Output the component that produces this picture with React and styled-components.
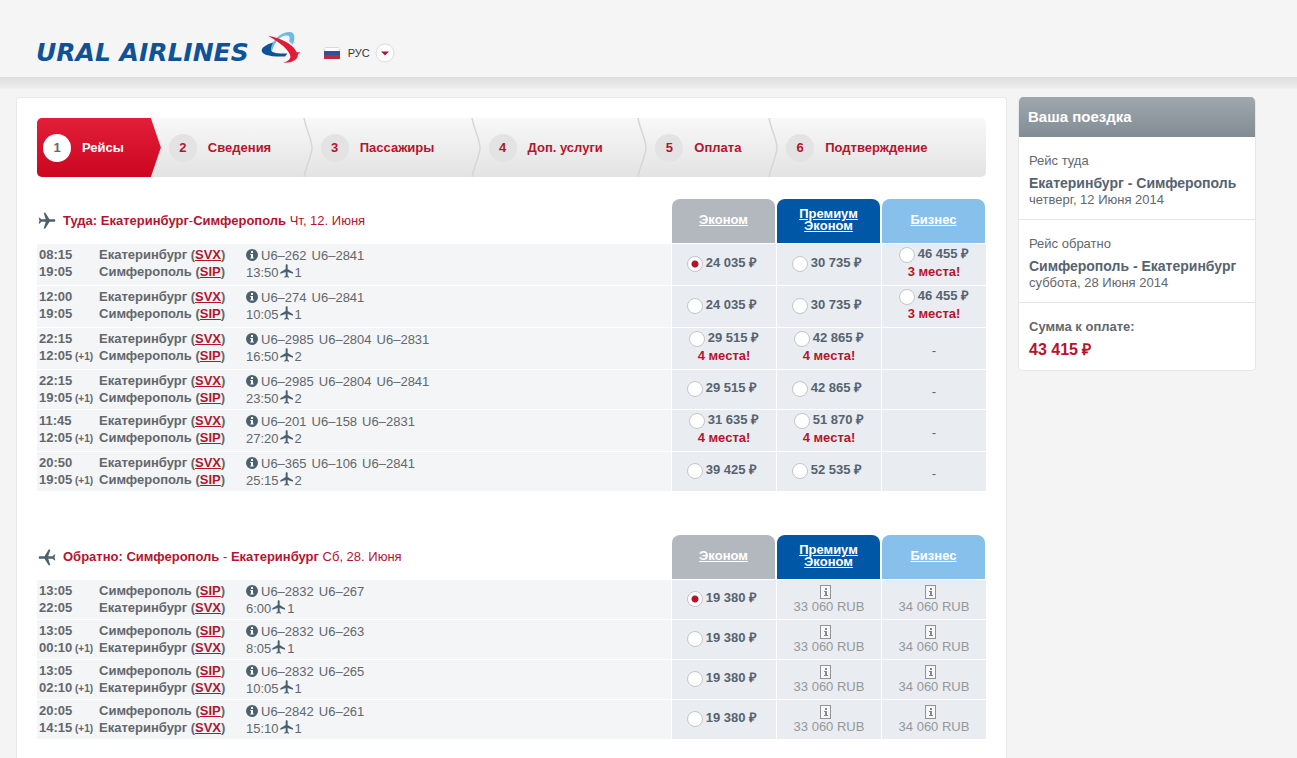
import React, { useState } from 'react';
import styled, { createGlobalStyle } from 'styled-components';
import { MdFlight } from 'react-icons/md';

const steps = ['Рейсы', 'Сведения', 'Пассажиры', 'Доп. услуги', 'Оплата', 'Подтверждение'];

const svx = { city: 'Екатеринбург', code: 'SVX' };
const sip = { city: 'Симферополь', code: 'SIP' };

const outbound = [
  { depart: '08:15', arrive: '19:05', flights: ['U6–262', 'U6–2841'], duration: '13:50', stops: 1, fares: [{ price: '24 035' }, { price: '30 735' }, { price: '46 455', left: 3 }] },
  { depart: '12:00', arrive: '19:05', flights: ['U6–274', 'U6–2841'], duration: '10:05', stops: 1, fares: [{ price: '24 035' }, { price: '30 735' }, { price: '46 455', left: 3 }] },
  { depart: '22:15', arrive: '12:05', nextDay: true, flights: ['U6–2985', 'U6–2804', 'U6–2831'], duration: '16:50', stops: 2, fares: [{ price: '29 515', left: 4 }, { price: '42 865', left: 4 }, null] },
  { depart: '22:15', arrive: '19:05', nextDay: true, flights: ['U6–2985', 'U6–2804', 'U6–2841'], duration: '23:50', stops: 2, fares: [{ price: '29 515' }, { price: '42 865' }, null] },
  { depart: '11:45', arrive: '12:05', nextDay: true, flights: ['U6–201', 'U6–158', 'U6–2831'], duration: '27:20', stops: 2, fares: [{ price: '31 635', left: 4 }, { price: '51 870', left: 4 }, null] },
  { depart: '20:50', arrive: '19:05', nextDay: true, flights: ['U6–365', 'U6–106', 'U6–2841'], duration: '25:15', stops: 2, fares: [{ price: '39 425' }, { price: '52 535' }, null] },
];

const returnFares = [{ price: '19 380' }, { locked: '33 060 RUB' }, { locked: '34 060 RUB' }];

const inbound = [
  { depart: '13:05', arrive: '22:05', flights: ['U6–2832', 'U6–267'], duration: '6:00', stops: 1, fares: returnFares },
  { depart: '13:05', arrive: '00:10', nextDay: true, flights: ['U6–2832', 'U6–263'], duration: '8:05', stops: 1, fares: returnFares },
  { depart: '13:05', arrive: '02:10', nextDay: true, flights: ['U6–2832', 'U6–265'], duration: '10:05', stops: 1, fares: returnFares },
  { depart: '20:05', arrive: '14:15', nextDay: true, flights: ['U6–2842', 'U6–261'], duration: '15:10', stops: 1, fares: returnFares },
];

const InfoIcon = () => (
  <InfoSvg viewBox="0 0 12 12" aria-hidden="true">
    <circle cx="6" cy="6" r="6" fill="#4b6170" />
    <path d="M5 2h2v2H5zM4.4 5H7v3.6h.7v1H4.3v-1H5V6h-.6z" fill="#fff" />
  </InfoSvg>
);

const LockedIcon = () => (
  <LockedSvg viewBox="0 0 11 14" aria-hidden="true">
    <rect x="0.5" y="0.5" width="10" height="13" fill="#f6f7f8" stroke="#8f9396" />
    <path d="M5 3h2v2H5zM4 6h3v4h1v1H4v-1h1V7H4z" fill="#85898c" />
  </LockedSvg>
);

const Emblem = () => (
  <EmblemSvg viewBox="0 0 40 33" aria-hidden="true">
    <path d="M8 18C13 8 20 1 28.500 1c5.500 0 6 5 3.500 12.500l-4-3C29.500 6 28.500 4.500 25.500 4.500 20 4.500 14 10 11 20z" fill="#6dbbe0" />
    <path d="M12 11.500C6 13.500.800 16 .700 19.500.600 23.500 8 26 24 25.500l2.500-3C15 23 10.500 21.500 10 19 9.600 16.500 11 14 12 11.500z" fill="#0f5296" />
    <path d="M7 4.700c5.500 1.200 14 3.300 20 7.300 5 3.300 7.500 6.500 8.700 9.300l3.800-.1c-1.200 1-2.300 1.500-2.700 2.500.5 4.500-5.300 8.500-14.600 8 4-1.200 7.600-3.500 7.200-6.500C28.500 19.500 20 12 7 4.700z" fill="#e11b34" />
  </EmblemSvg>
);

const Fare = ({ fare, name, label, checked, onSelect }) => {
  if (!fare) return <FareCell><Empty>-</Empty></FareCell>;
  if (fare.locked) {
    return (
      <FareCell>
        <Locked>
          <LockedIcon />
          {fare.locked}
        </Locked>
      </FareCell>
    );
  }
  return (
    <FareCell>
      <Offer>
        <FareLabel $short={!fare.left}>
          <Radio name={name} aria-label={label} checked={checked} onChange={onSelect} />
          <span>{fare.price} ₽</span>
        </FareLabel>
        {fare.left && <SeatsLeft>{fare.left} места!</SeatsLeft>}
      </Offer>
    </FareCell>
  );
};

const FlightTable = ({ id, title, from, to, date, back, rows }) => {
  const [selected, setSelected] = useState('0-0');
  const classes = ['Эконом', 'Премиум Эконом', 'Бизнес'];

  return (
    <Table>
      <colgroup>
        <TimeCol />
        <CityCol />
        <col />
        <FareCol />
        <FareCol />
        <FareCol />
      </colgroup>
      <thead>
        <tr>
          <TitleCell colSpan={3}>
            <Title>
              <DirectionIcon $back={back} />
              <span>
                <b>{title}: {from.city}</b>{back ? ' - ' : '-'}<b>{to.city}</b> {date}
              </span>
            </Title>
          </TitleCell>
          {classes.map((name, i) => (
            <ClassCell key={name}>
              <ClassTab $color={['#b3b8bf', '#0057a6', '#87c0eb'][i]}>
                <a href="#class">{name}</a>
              </ClassTab>
            </ClassCell>
          ))}
        </tr>
      </thead>
      <tbody>
        {rows.map((row, r) => (
          <Row key={r} $tall={row.fares.some((fare) => fare && fare.left)}>
            <TimeCell>
              {row.depart}<br />
              {row.arrive}{row.nextDay && <NextDay> (+1)</NextDay>}
            </TimeCell>
            <CityCell>
              {from.city} (<a href={`#${from.code}`}>{from.code}</a>)<br />
              {to.city} (<a href={`#${to.code}`}>{to.code}</a>)
            </CityCell>
            <DetailsCell>
              <DetailsLine>
                <InfoIcon />
                <Flights>
                  {row.flights.map((flight) => <span key={flight}>{flight}</span>)}
                </Flights>
              </DetailsLine>
              <DetailsLine>
                {row.duration}
                <StopIcon />
                {row.stops}
              </DetailsLine>
            </DetailsCell>
            {row.fares.map((fare, f) => (
              <Fare
                key={f}
                fare={fare}
                name={id}
                label={`${classes[f]}, ${row.depart}`}
                checked={selected === `${r}-${f}`}
                onSelect={() => setSelected(`${r}-${f}`)}
              />
            ))}
          </Row>
        ))}
      </tbody>
    </Table>
  );
};

const App = () => {
  return (
    <Page>
      <GlobalStyle />
      <Header>
        <Logo href="#home">
          URAL AIRLINES
          <Emblem />
        </Logo>
        <Language>
          <Flag viewBox="0 0 16 12" aria-hidden="true">
            <rect x="0.5" y="0.5" width="15" height="11" rx="1" fill="#fff" stroke="#d9d9de" />
            <rect y="4" width="16" height="4" fill="#31509b" />
            <rect y="8" width="16" height="4" fill="#c2273d" />
          </Flag>
          <LanguageSelect aria-label="Язык">
            <option>РУС</option>
          </LanguageSelect>
          <Arrow viewBox="0 0 20 20" aria-hidden="true">
            <circle cx="10" cy="10" r="9" fill="#fff" stroke="#dcdcdc" />
            <path d="M6 8.500h8l-4 4z" fill="#b5122e" />
          </Arrow>
        </Language>
      </Header>

      <Content>
        <Main>
          <Steps>
            {steps.map((step, i) => (
              <Step key={step} $active={i === 0}>
                <StepNumber $active={i === 0}>{i + 1}</StepNumber>
                {step}
                {i > 0 && i < steps.length - 1 && (
                  <Chevron viewBox="0 0 10 59" preserveAspectRatio="none">
                    <path d="M1 0C3 11 9 22 9 29.500S3 48 1 59" fill="none" stroke="#d6d6d6" strokeWidth="1.500" />
                  </Chevron>
                )}
              </Step>
            ))}
          </Steps>
          <FlightTable id="outbound" title="Туда" from={svx} to={sip} date="Чт, 12. Июня" rows={outbound} />
          <FlightTable id="inbound" title="Обратно" from={sip} to={svx} date="Сб, 28. Июня" rows={inbound} back />
        </Main>

        <Sidebar>
          <SidebarTitle>Ваша поездка</SidebarTitle>
          <SidebarSection>
            <SidebarLabel>Рейс туда</SidebarLabel>
            <Route>Екатеринбург - Симферополь</Route>
            <SidebarDate>четверг, 12 Июня 2014</SidebarDate>
          </SidebarSection>
          <SidebarSection>
            <SidebarLabel>Рейс обратно</SidebarLabel>
            <Route>Симферополь - Екатеринбург</Route>
            <SidebarDate>суббота, 28 Июня 2014</SidebarDate>
          </SidebarSection>
          <SidebarSection>
            <SidebarLabel><b>Сумма к оплате:</b></SidebarLabel>
            <Total>43 415 ₽</Total>
          </SidebarSection>
        </Sidebar>
      </Content>
    </Page>
  );
};

export default App;

const GlobalStyle = createGlobalStyle`
  * {
    box-sizing: border-box;
  }

  body {
    margin: 0;
    background: #f4f4f4;
    color: #63676b;
    font-family: 'Liberation Sans', Arial, sans-serif;
    font-size: 13px;
    line-height: 17px;
  }
`;

const Page = styled.div`
  display: flex;
  flex-direction: column;
  min-height: 100vh;
`;

const Header = styled.header`
  display: flex;
  align-items: center;
  gap: 23px;
  height: 77px;
  padding: 28px 36px 0;
  background: #f5f5f5;
`;

const Logo = styled.a`
  display: flex;
  align-items: center;
  gap: 12px;
  height: 40px;
  color: #0f5296;
  font-family: 'DejaVu Sans', sans-serif;
  font-size: 25px;
  font-weight: bold;
  font-style: italic;
  text-decoration: none;
  white-space: nowrap;
`;

const EmblemSvg = styled.svg`
  width: 40px;
  height: 33px;
  margin-bottom: 10px;
`;

const Language = styled.div`
  display: flex;
  align-items: center;
  position: relative;
`;

const Flag = styled.svg`
  width: 16px;
  height: 12px;
  margin-right: 8px;
`;

const LanguageSelect = styled.select`
  appearance: none;
  width: 47px;
  height: 20px;
  padding: 0;
  border: none;
  background: transparent;
  color: #333;
  font-family: inherit;
  font-size: 11px;
  cursor: pointer;
`;

const Arrow = styled.svg`
  position: absolute;
  right: 0;
  width: 20px;
  height: 20px;
  pointer-events: none;
`;

const Content = styled.div`
  display: flex;
  flex: 1;
  align-items: flex-start;
  gap: 11px;
  padding: 20px 41px 0 16px;
  background: linear-gradient(#dedede, #ededed 11px, #f4f4f4 12px);
`;

const Main = styled.main`
  flex: 1;
  align-self: stretch;
  padding: 20px 20px 18px;
  border: 1px solid #e8e8e8;
  border-bottom: none;
  border-radius: 4px 4px 0 0;
  background: #fff;
`;

const Steps = styled.nav`
  display: grid;
  grid-template-columns: 124fr 152fr 168fr 167fr 131fr 208fr;
  height: 59px;
  margin-bottom: 22px;
  border-radius: 5px;
  background: linear-gradient(#f8f8f8, #e3e3e3);
  overflow: hidden;
`;

const Step = styled.div`
  display: flex;
  align-items: center;
  gap: 11px;
  position: relative;
  padding-left: ${({ $active }) => ($active ? '6px' : '8px')};
  background: ${({ $active }) => ($active ? 'linear-gradient(#e31e39, #cb0620)' : 'none')};
  clip-path: ${({ $active }) => ($active ? 'polygon(0 0, calc(100% - 10px) 0, 100% 50%, calc(100% - 10px) 100%, 0 100%)' : 'none')};
  color: ${({ $active }) => ($active ? '#fff' : '#b5142f')};
  font-weight: bold;
  white-space: nowrap;
`;

const StepNumber = styled.span`
  width: 28px;
  height: 28px;
  border-radius: 50%;
  background: ${({ $active }) => ($active ? '#fff' : '#e3e3e3')};
  color: ${({ $active }) => ($active ? '#63676b' : '#b5142f')};
  line-height: 28px;
  text-align: center;
`;

const Chevron = styled.svg`
  position: absolute;
  top: 0;
  right: 0;
  width: 10px;
  height: 100%;
`;

const Table = styled.table`
  width: 100%;
  border-spacing: 0;
  table-layout: fixed;

  & + & {
    margin-top: 43px;
  }

  th,
  td {
    padding: 0;
  }
`;

const TimeCol = styled.col`
  width: 61px;
`;

const CityCol = styled.col`
  width: 148px;
`;

const FareCol = styled.col`
  width: 105px;
`;

const TitleCell = styled.th`
  height: 45px;
  color: #b5142f;
  font-weight: normal;
  text-align: left;
`;

const Title = styled.div`
  display: flex;
  align-items: center;
  gap: 6px;
  padding-bottom: 2px;
`;

const DirectionIcon = styled(MdFlight)`
  width: 20px;
  height: 20px;
  color: #4b6170;
  transform: rotate(${({ $back }) => ($back ? '-90deg' : '90deg')});
`;

const ClassCell = styled.th`
  vertical-align: top;
`;

const ClassTab = styled.div`
  display: flex;
  align-items: center;
  justify-content: center;
  height: 44px;
  margin: 0 1px;
  padding: 0 16px 2px;
  border-radius: 8px 8px 0 0;
  background: ${({ $color }) => $color};
  line-height: 12px;

  a {
    color: #fff;
  }
`;

const Row = styled.tr`
  height: ${({ $tall }) => ($tall ? '42px' : '40px')};

  td {
    border-bottom: 1px solid #fff;
    background: #f3f5f7;
  }
`;

const TimeCell = styled.td`
  font-weight: bold;
  white-space: nowrap;

  && {
    padding: 2px 0 0 2px;
  }

  vertical-align: top;
`;

const NextDay = styled.small`
  font-size: 10px;
`;

const CityCell = styled(TimeCell)`
  && {
    padding-left: 1px;
  }

  a {
    color: #b5142f;
  }
`;

const DetailsCell = styled.td`
  vertical-align: top;

  && {
    padding-top: 3px;
  }
`;

const DetailsLine = styled.div`
  display: flex;
  align-items: center;
  height: 17px;
`;

const Flights = styled.span`
  display: flex;
  gap: 5px;
`;

const InfoSvg = styled.svg`
  width: 12px;
  height: 12px;
  margin: 0 3px 2px 0;
`;

const StopIcon = styled(MdFlight)`
  width: 16px;
  height: 16px;
  margin-bottom: 3px;
  color: #4b6170;
`;

const FareCell = styled.td`
  text-align: center;

  ${Row} && {
    border-left: 1px solid #fff;
    background: #e9ecf0;
  }
`;

const Empty = styled.div`
  padding-top: 4px;
`;

const Offer = styled.div`
  padding-bottom: 4px;
`;

const FareLabel = styled.label`
  display: flex;
  justify-content: center;
  gap: 3px;
  height: 18px;
  padding-right: ${({ $short }) => ($short ? '4px' : '0')};
  color: #566370;
  font-weight: bold;
  white-space: nowrap;
  cursor: pointer;
`;

const Radio = styled.input.attrs({ type: 'radio' })`
  appearance: none;
  width: 16px;
  height: 16px;
  margin: 2px 0 0;
  border: 1px solid #c3c6c9;
  border-radius: 50%;
  background: #fff;
  cursor: pointer;

  &:checked {
    background: radial-gradient(circle, #b5142f 3px, #fff 4px);
  }
`;

const SeatsLeft = styled.div`
  color: #b5142f;
  font-weight: bold;
`;

const Locked = styled.div`
  display: flex;
  flex-direction: column;
  align-items: center;
  color: #95989b;
  line-height: 16px;
`;

const LockedSvg = styled.svg`
  width: 11px;
  height: 14px;
  margin-right: 8px;
`;

const Sidebar = styled.aside`
  width: 238px;
  border: 1px solid #e6e6e6;
  border-top: none;
  border-radius: 5px;
  background: #fff;
  overflow: hidden;
`;

const SidebarTitle = styled.h2`
  height: 40px;
  margin: 0 -1px;
  padding: 0 10px;
  background: linear-gradient(#a0a8ae, #818c94);
  color: #fff;
  font-size: 15px;
  line-height: 40px;
`;

const SidebarSection = styled.section`
  padding: 15px 10px 11px;
  white-space: nowrap;

  & + & {
    border-top: 1px solid #e2e4e6;
  }
`;

const SidebarLabel = styled.div`
  margin-bottom: 6px;
`;

const Route = styled.div`
  color: #566370;
  font-size: 14px;
  font-weight: bold;
`;

const SidebarDate = styled.div`
  line-height: 16px;
`;

const Total = styled.div`
  color: #b5142f;
  font-size: 16px;
  font-weight: bold;
  line-height: 18px;
`;
